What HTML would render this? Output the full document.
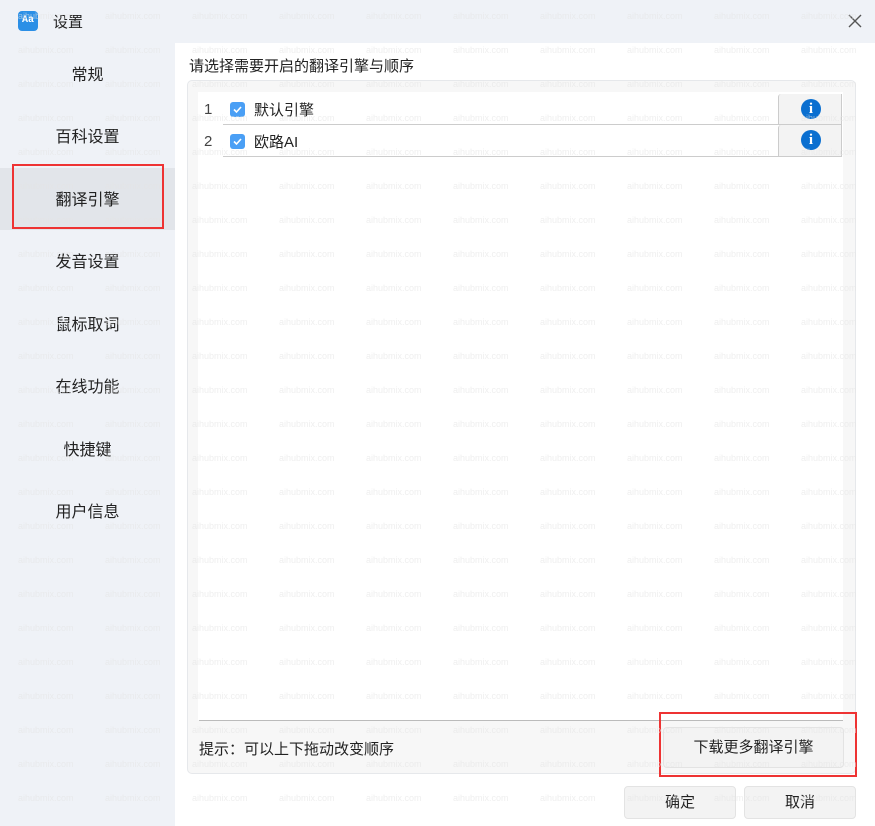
<!DOCTYPE html>
<html><head><meta charset="utf-8"><style>
*{margin:0;padding:0;box-sizing:border-box}
body{width:875px;height:826px;position:relative;overflow:hidden;background:#eff2f7;font-family:"Liberation Sans","Noto Sans CJK SC",sans-serif;color:#222}
.abs{position:absolute}
.title{left:53px;top:11px;font-size:15px}
.logo{left:18px;top:11px;width:20px;height:20px;border-radius:4px;background:#2b8fe6;color:#fff;font-size:10px;font-weight:bold;text-align:center;line-height:20px;font-family:"Liberation Mono",monospace}
.close{left:846px;top:12px;width:18px;height:18px}
.nav{left:0;width:175px;height:62px;text-align:center;line-height:66px;font-size:16px}
.sel{background:#e2e5ea}
.main{left:175px;top:43px;width:700px;height:783px;background:#fff}
.label{left:189px;top:55px;font-size:15px}
.box{left:187px;top:80px;width:669px;height:694px;background:#f7f7f7;border:1px solid #e6e8eb;border-radius:5px}
.list{left:198px;top:92px;width:645px;height:628px;background:#fff}
.row{left:198px;width:644px;height:32px;font-size:15px}
.num{position:absolute;left:6px;top:8px;color:#444}
.cb{position:absolute;left:32px;top:9px;width:15px;height:15px;border-radius:3px;background:#4a9ff5}
.txt{position:absolute;left:56px;top:6px}
.line{position:absolute;left:25px;right:64px;bottom:0;height:1px;background:#ccc}
.info{position:absolute;right:0;top:1px;width:64px;height:31px;background:#f3f3f3;border-left:1px solid #ccc;border-right:1px solid #ccc;border-bottom:1px solid #ccc;border-radius:3px 0 0 0}
.ic{position:absolute;left:22px;top:5px;width:20px;height:20px;border-radius:50%;background:#0a6fd0;color:#fff;font-weight:bold;font-size:15px;text-align:center;line-height:20px;font-family:"Liberation Serif",serif}
.sep{left:199px;top:720px;width:644px;height:1px;background:#bbb}
.hint{left:199px;top:738px;font-size:15px}
.btn{background:#f3f3f3;border:1px solid #e3e3e3;border-radius:4px;text-align:center;font-size:15px}
.red{border:2px solid #ee3333}
</style></head><body>
<div class="abs logo">Aa</div>
<div class="abs title">设置</div>
<svg class="abs close" viewBox="0 0 18 18"><path d="M3 3L15 15M15 3L3 15" stroke="#555" stroke-width="1.4"/></svg>
<div class="abs nav" style="top:43px">常规</div>
<div class="abs nav" style="top:105px">百科设置</div>
<div class="abs nav sel" style="top:168px">翻译引擎</div>
<div class="abs nav" style="top:230px">发音设置</div>
<div class="abs nav" style="top:293px">鼠标取词</div>
<div class="abs nav" style="top:355px">在线功能</div>
<div class="abs nav" style="top:418px">快捷键</div>
<div class="abs nav" style="top:480px">用户信息</div>
<div class="abs red" style="left:12px;top:164px;width:152px;height:65px"></div>
<div class="abs main"></div>
<div class="abs label">请选择需要开启的翻译引擎与顺序</div>
<div class="abs box"></div>
<div class="abs list"></div>
<div class="abs row" style="top:93px"><span class="num">1</span><span class="cb"><svg width="15" height="15"><path d="M4 7.5L6.5 10L11 5" stroke="#fff" stroke-width="1.6" fill="none"/></svg></span><span class="txt">默认引擎</span><div class="line"></div><div class="info"><div class="ic">i</div></div></div>
<div class="abs row" style="top:125px"><span class="num">2</span><span class="cb"><svg width="15" height="15"><path d="M4 7.5L6.5 10L11 5" stroke="#fff" stroke-width="1.6" fill="none"/></svg></span><span class="txt">欧路AI</span><div class="line"></div><div class="info" style="top:0;height:32px"><div class="ic">i</div></div></div>
<div class="abs sep"></div>
<div class="abs hint">提示：可以上下拖动改变顺序</div>
<div class="abs btn" style="left:663px;top:727px;width:181px;height:41px;line-height:39px">下载更多翻译引擎</div>
<div class="abs red" style="left:659px;top:712px;width:198px;height:65px"></div>
<div class="abs btn" style="left:624px;top:786px;width:112px;height:33px;line-height:31px">确定</div>
<div class="abs btn" style="left:744px;top:786px;width:112px;height:33px;line-height:31px">取消</div>
<svg class="abs" style="left:0;top:0;pointer-events:none" width="875" height="826">
<defs><pattern id="w" x="18" y="9" width="87" height="34" patternUnits="userSpaceOnUse"><text x="0" y="10" font-size="9" fill="#e4e4e4" font-family="Liberation Sans,sans-serif">aihubmix.com</text></pattern></defs>
<rect width="875" height="826" fill="url(#w)" opacity="0.6"/>
</svg>
</body></html>
